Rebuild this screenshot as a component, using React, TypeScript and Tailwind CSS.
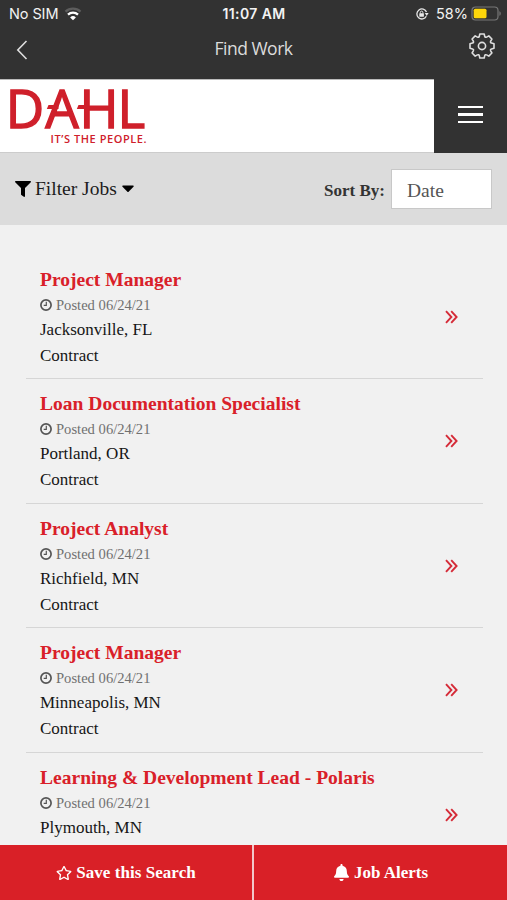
import { FaFilter, FaRegStar, FaBell } from 'react-icons/fa';

const jobs = [
  { title: 'Project Manager', posted: '06/24/21', location: 'Jacksonville, FL', type: 'Contract' },
  { title: 'Loan Documentation Specialist', posted: '06/24/21', location: 'Portland, OR', type: 'Contract' },
  { title: 'Project Analyst', posted: '06/24/21', location: 'Richfield, MN', type: 'Contract' },
  { title: 'Project Manager', posted: '06/24/21', location: 'Minneapolis, MN', type: 'Contract' },
  { title: 'Learning & Development Lead - Polaris', posted: '06/24/21', location: 'Plymouth, MN', type: '' },
];

function StatusBar() {
  return (
    <div className="grid h-7 grid-cols-3 items-center pl-[9px] pr-[6px] font-[Inter,sans-serif] text-[14.5px] leading-none">
      <div className="flex items-center gap-[6px]">
        <span className="tracking-[-0.1px]">No SIM</span>
        <svg width="18" height="14" viewBox="0 0 17 14" fill="none" strokeWidth="2.3">
          <path d="M1 4.6a11 11 0 0 1 15 0" stroke="#5d5d5d" />
          <path d="M3.5 7.6a7.3 7.3 0 0 1 10 0" stroke="#fff" />
          <path d="M8.5 13.2 5.6 10.4a4.2 4.2 0 0 1 5.8 0z" fill="#fff" />
        </svg>
      </div>
      <span className="ml-[-2px] text-center text-[14px] font-semibold tracking-[0.4px]">11:07 AM</span>
      <div className="flex items-center justify-end">
        <svg className="mr-[7px]" width="14" height="14" viewBox="0 0 14 14" fill="none" stroke="#e8e8e8">
          <path d="M11.3 9.3a5 5 0 1 1 .2-4.2" strokeWidth="1.3" />
          <path d="M9.8 6h3.8l-1.9 2.9z" fill="#e8e8e8" stroke="none" />
          <rect x="4.3" y="6.3" width="4.6" height="3.4" rx=".5" fill="#e8e8e8" stroke="none" />
          <path d="M5.3 6.5V5.4a1.3 1.3 0 0 1 2.6 0v1.1" />
        </svg>
        <span>58%</span>
        <svg className="ml-[3px] mt-[-2px]" width="30" height="15" viewBox="0 0 30 15">
          <rect x="1" y="1" width="26" height="13" rx="3.5" fill="none" stroke="#777" strokeWidth="1.2" />
          <rect x="2.7" y="2.7" width="12.8" height="9.6" rx="1.6" fill="#fdd60a" />
          <path d="M28.4 5.2c1.8.7 1.8 3.9 0 4.6z" fill="#777" />
        </svg>
      </div>
    </div>
  );
}

function NavBar() {
  return (
    <div className="flex h-[51px] items-center justify-between pl-4 pr-3">
      <svg className="mt-[-8px]" width="27" height="20" viewBox="0 0 27 20" fill="none" stroke="#dedede" strokeWidth="1.6">
        <path d="M10.5 1 1.8 10l8.7 9" />
      </svg>
      <h1 className="mt-[-11px] mr-[5px] font-['Open_Sans',sans-serif] text-[17.5px] font-medium tracking-[-0.5px] text-[#dcdcdc]">Find Work</h1>
      <svg className="mt-[-15px]" width="26" height="26" viewBox="0 0 26 26" fill="none" stroke="#dedede" strokeWidth="1.6" strokeLinejoin="round">
        <path d="M10.8 1h4.4l.5 2.300q.4 1.500 1.900.8l2.200-1.200 3.100 3.100-1.200 2.200q-.7 1.500.8 1.900l2.500.7v4.400l-2.500.7q-1.500.4-.8 1.900l1.200 2.200-3.100 3.100-2.200-1.200q-1.500-.7-1.900.8l-.5 2.300h-4.400l-.5-2.300q-.4-1.500-1.900-.8l-2.200 1.200-3.100-3.100 1.200-2.200q.7-1.500-.8-1.900L1 15.200v-4.400l2.500-.7q1.500-.4.8-1.900L3.100 6l3.100-3.100 2.200 1.200q1.500.7 1.900-.8z" />
        <circle cx="13" cy="13" r="3.600" />
      </svg>
    </div>
  );
}

function Logo() {
  return (
    <svg width="160" height="72" viewBox="0 0 160 72" fill="#cf202b">
      <text x="5.8 45.300 79.500 117.500" y="48" fontFamily="Open Sans, sans-serif" fontSize="53" stroke="#cf202b" strokeWidth="1.400">DAHL</text>
      <path d="M48.500 25h10v4H46.800zM78.500 25h10v4H76.800z" />
      <text x="50.500" y="62.700" textLength="96" fontFamily="Open Sans, sans-serif" fontWeight="600" fontSize="11">IT’S THE PEOPLE.</text>
    </svg>
  );
}

function JobRow({ job }: { job: (typeof jobs)[number] }) {
  return (
    <li className="flex h-[124.6px] shrink-0 items-start justify-between border-b border-[#d6d6d6] pt-[12px] pl-[14px] pr-[25px]">
      <div className="text-[17px] text-[#161616]">
        <h2 className="text-[19.55px] leading-[25px] font-bold text-[#d92029]">{job.title}</h2>
        <p className="flex items-center gap-1 text-[14.6px] leading-[26px] text-[#707070]">
          <svg width="12" height="12" viewBox="0 0 12 12" fill="none" stroke="#555">
            <circle cx="6" cy="6" r="5.1" strokeWidth="1.7" />
            <path d="M6.3 2.8v3.6H3.7" strokeWidth="1.2" />
          </svg>
          Posted {job.posted}
        </p>
        <p className="leading-6">{job.location}</p>
        {job.type && <p className="leading-7">{job.type}</p>}
      </div>
      <svg className="mt-[43px]" width="13" height="14" viewBox="0 0 13 14" fill="none" stroke="#d52b38" strokeWidth="1.9">
        <path d="m1 1.2 5.4 5.8L1 12.8M6.2 1.2l5.4 5.8-5.4 5.8" />
      </svg>
    </li>
  );
}

export default function App() {
  return (
    <div className="flex h-[900px] w-[507px] flex-col overflow-hidden bg-[#f1f1f1] font-['Liberation_Serif',serif]">
      <header className="bg-[#323232] text-[#f2f2f2]">
        <StatusBar />
        <NavBar />
      </header>

      <div className="flex h-[74px] shrink-0 bg-[#323232]">
        <div className="w-[434px] border-t border-b border-t-[#bbb] border-b-[#ccc] bg-white">
          <Logo />
        </div>
        <button className="flex flex-1 flex-col items-center justify-center gap-[5px] pb-[3px]">
          <span className="h-[2.5px] w-[25px] bg-white" />
          <span className="h-[2.5px] w-[25px] bg-white" />
          <span className="h-[2.5px] w-[25px] bg-white" />
        </button>
      </div>

      <div className="flex h-[72px] shrink-0 items-center justify-between bg-[#dcdcdc] px-[15px]">
        <button className="flex items-center text-[19.5px] text-[#1c1c1c]">
          <FaFilter className="mr-[4px] text-[16px] text-black" />
          Filter Jobs
          <svg className="ml-[5px]" width="12" height="8" viewBox="0 0 12 8">
            <path d="M1 .5h10q1.2.3.5 1.2L6.6 6.800q-.6.500-1.200 0L.5 1.700Q-.2.800 1 .5z" />
          </svg>
        </button>
        <label className="flex items-center gap-[6px] text-[17px] font-bold text-[#333]">
          <span className="mt-[4px]">Sort By:</span>
          <span className="flex h-10 w-[101px] items-center border border-[#c8c8c8] bg-white pt-[3px] pl-[15px] text-[19.5px] font-normal text-[#555]">
            Date
          </span>
        </label>
      </div>

      <ul className="mr-6 ml-[26px] flex min-h-0 flex-1 flex-col overflow-hidden pt-[29.5px]">
        {jobs.map((job, i) => (
          <JobRow key={i} job={job} />
        ))}
      </ul>

      <footer className="flex h-[55px] shrink-0 bg-[#d92027] text-[17px] font-bold text-white">
        <button className="flex w-[254px] items-center justify-center gap-1 border-r-2 border-[#f3c8ca]">
          <FaRegStar className="text-[16px]" />
          <span className="tracking-[0.05px]">Save this Search</span>
        </button>
        <button className="flex flex-1 items-center justify-center gap-1">
          <FaBell className="text-[17px]" />
          Job Alerts
        </button>
      </footer>
    </div>
  );
}
